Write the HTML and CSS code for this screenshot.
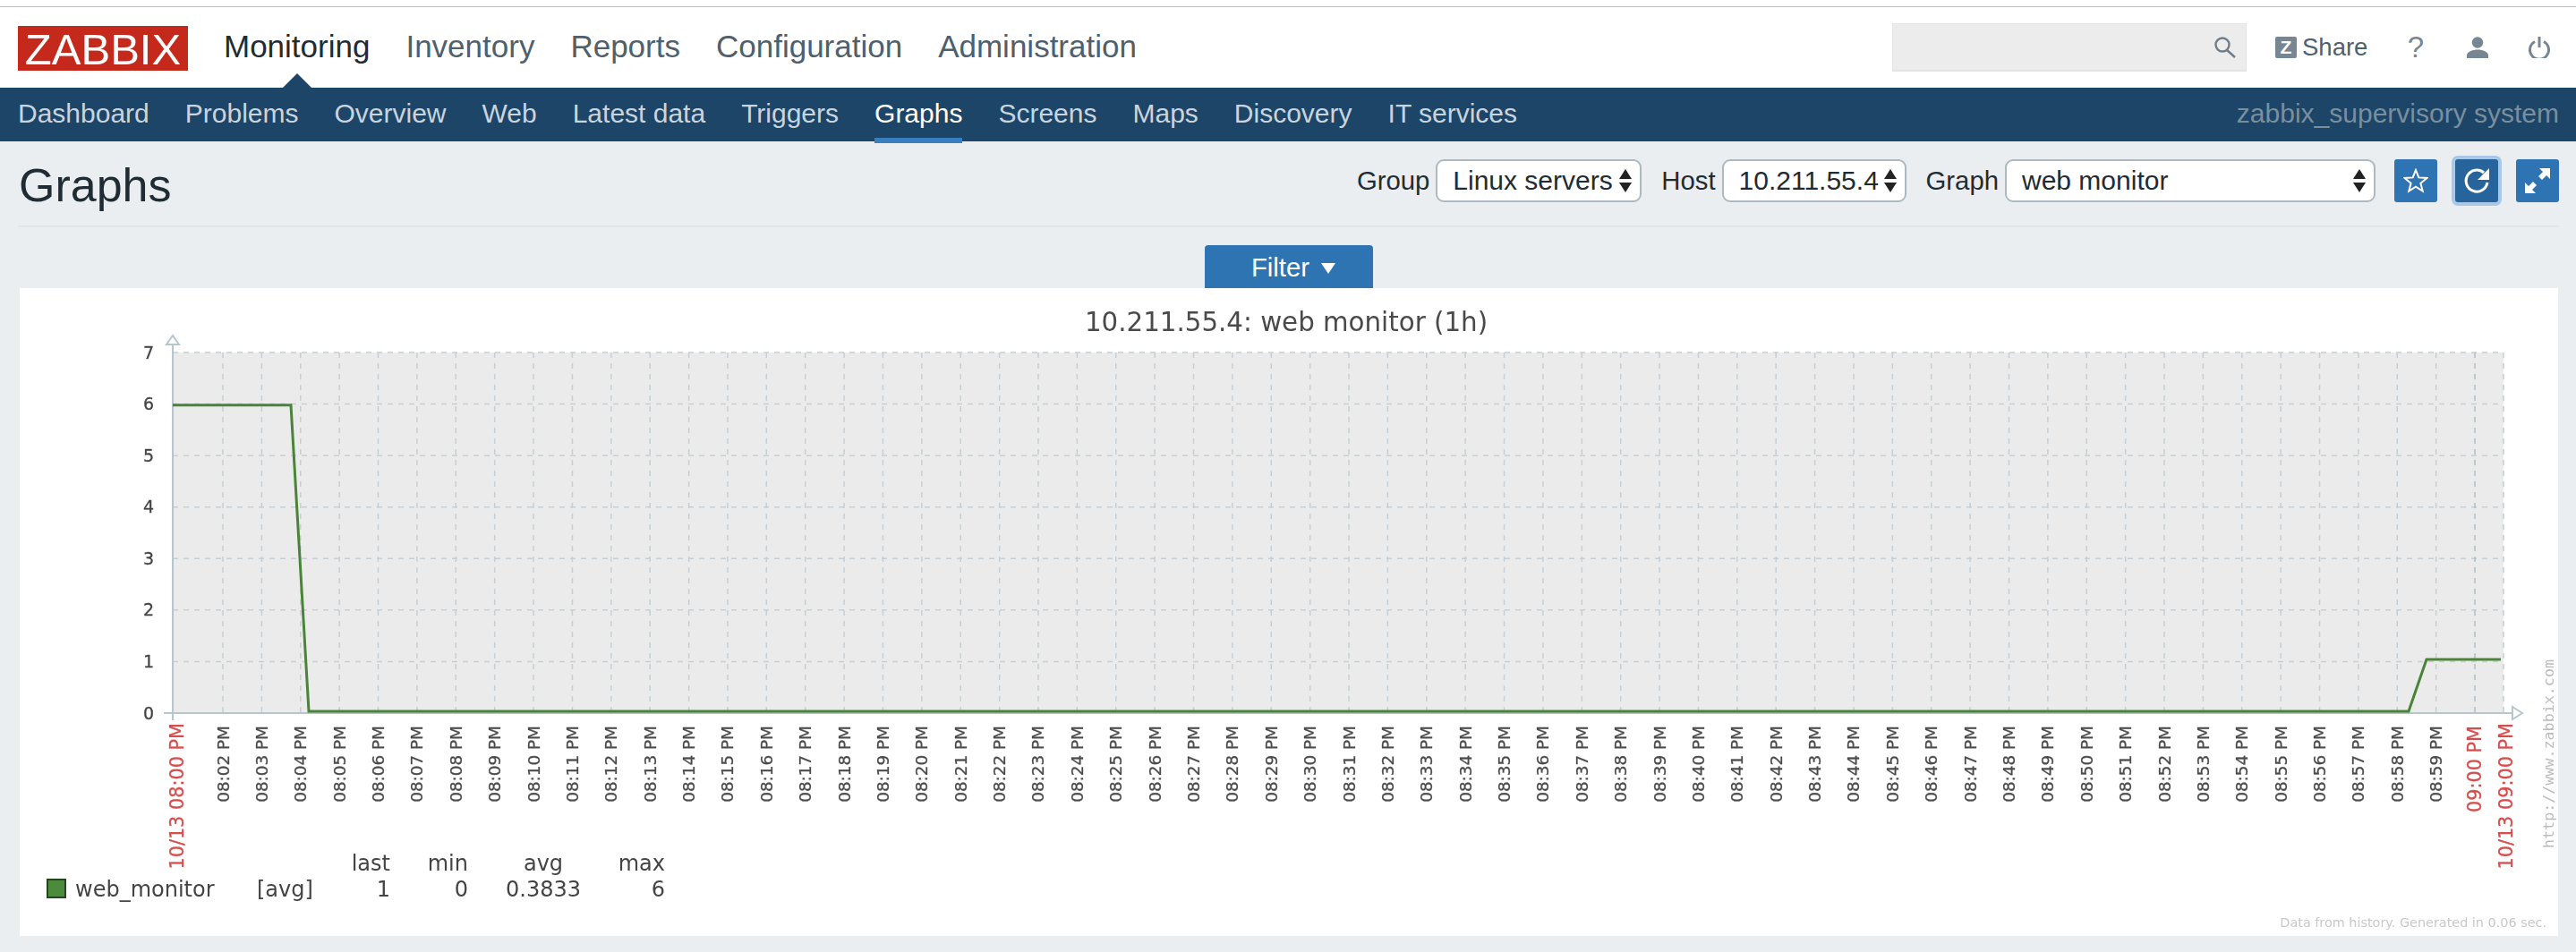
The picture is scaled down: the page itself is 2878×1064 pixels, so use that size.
FILE: index.html
```html
<!DOCTYPE html>
<html>

<head>
    <meta charset='utf-8'>
    <title>Graphs</title>
    <link rel="stylesheet" href="styles.css">
    <script src="chart.js" defer></script>
</head>

<body>
    <div class="top-line"></div>
    <header class="header">
        <a class="logo">ZABBIX</a>
        <nav class="main-nav">
            <a class="main-link active">Monitoring</a>
            <a class="main-link">Inventory</a>
            <a class="main-link">Reports</a>
            <a class="main-link">Configuration</a>
            <a class="main-link">Administration</a>
        </nav>
        <div class="tools">
            <div class="search">
                <svg class="search-icon" viewBox="0 0 26 24">
                    <circle cx="10" cy="9" r="7.5" />
                    <path d="M15 15 L24 23" />
                </svg>
            </div>
            <a class="share"><span class="share-z">Z</span>Share</a>
            <a class="help">?</a>
            <svg class="tool-icon user" viewBox="0 0 24 24">
                <circle cx="12" cy="6.5" r="6.2" />
                <path d="M0 24 V21 C0 17 6 14.5 12 14.5 C18 14.5 24 17 24 21 V24 Z" />
            </svg>
            <svg class="tool-icon power" viewBox="0 0 24 24">
                <path d="M7 5.5 A10.5 10.5 0 1 0 17 5.5" />
                <path d="M12 0 V12" />
            </svg>
        </div>
    </header>
    <nav class="sub-nav">
        <a class="sub-link">Dashboard</a>
        <a class="sub-link">Problems</a>
        <a class="sub-link">Overview</a>
        <a class="sub-link">Web</a>
        <a class="sub-link">Latest data</a>
        <a class="sub-link">Triggers</a>
        <a class="sub-link active">Graphs</a>
        <a class="sub-link">Screens</a>
        <a class="sub-link">Maps</a>
        <a class="sub-link">Discovery</a>
        <a class="sub-link">IT services</a>
        <span class="server-name">zabbix_supervisory system</span>
    </nav>
    <main>
        <div class="title-row">
            <h1>Graphs</h1>
            <div class="controls">
                <label class="field">Group
                    <span class="select group-select">Linux servers<i class="updown"></i></span>
                </label>
                <label class="field">Host
                    <span class="select host-select">10.211.55.4<i class="updown"></i></span>
                </label>
                <label class="field">Graph
                    <span class="select graph-select">web monitor<i class="updown"></i></span>
                </label>
                <div class="buttons">
                    <button class="icon-btn">
                        <svg viewBox="0 0 28 28">
                            <path class="line-icon" d="M14 2 L17.3 10.4 L26.4 11 L19.4 16.8 L21.7 25.6 L14 20.7 L6.3 25.6 L8.6 16.8 L1.6 11 L10.7 10.4 Z" />
                        </svg>
                    </button>
                    <button class="icon-btn focused">
                        <svg viewBox="0 0 28 28">
                            <path class="line-icon thick" d="M22 5 A12 12 0 1 0 26 16" />
                            <path class="solid-icon" d="M28 0 V13 H15 Z" />
                        </svg>
                    </button>
                    <button class="icon-btn">
                        <svg viewBox="0 0 28 28">
                            <path class="solid-icon" d="M16 0 H28 V12 L24 8 L19 13 L15 9 L20 4 Z" />
                            <path class="solid-icon" d="M0 16 L4 20 L9 15 L13 19 L8 24 L12 28 H0 Z" />
                        </svg>
                    </button>
                </div>
            </div>
        </div>
        <div class="filter-row">
            <a class="filter-tab">Filter<i class="caret"></i></a>
        </div>
        <section class="panel">
            <svg id="chart" class="chart" viewBox="22 322 2836 724">
                <text class="chart-title" x="1437" y="370">10.211.55.4: web monitor (1h)</text>
                <rect class="plot" x="193" y="394" width="2604" height="403" />
                <g id="grid"></g>
                <path class="axis" d="M193 385 V805 M183 797 H2807" />
                <path class="arrow" d="M193 375 L186 385 H200 Z" />
                <path class="arrow" d="M2818 797 L2807 790 V804 Z" />
                <polyline class="series" points="193,452.7 325,452.7 345,795 2691,795 2711,737 2794,737" />
                <g id="labels"></g>

                <text class="legend" x="436" y="973" text-anchor="end">last</text>
                <text class="legend" x="523" y="973" text-anchor="end">min</text>
                <text class="legend" x="607" y="973" text-anchor="middle">avg</text>
                <text class="legend" x="743" y="973" text-anchor="end">max</text>
                <rect class="legend-box" x="53" y="983" width="20" height="20" />
                <text class="legend" x="84" y="1002">web_monitor</text>
                <text class="legend" x="287" y="1002">[avg]</text>
                <text class="legend" x="436" y="1002" text-anchor="end">1</text>
                <text class="legend" x="523" y="1002" text-anchor="end">0</text>
                <text class="legend" x="607" y="1002" text-anchor="middle">0.3833</text>
                <text class="legend" x="743" y="1002" text-anchor="end">6</text>

                <text class="site-url" transform="translate(2853 948) rotate(-90)">http://www.zabbix.com</text>
                <text class="generated" x="2845" y="1036" text-anchor="end">Data from history. Generated in 0.06 sec.</text>
            </svg>
        </section>
    </main>
</body>

</html>
```

FILE: styles.css
```css
body,
html {
    margin: 0;
    padding: 0;
    height: 1064px;
    overflow: hidden;
}

body {
    background: #ebeef1;
    font-family: "Liberation Sans", Arial, sans-serif;
    font-size: 29.3px;
    color: #1f2c33;
}

.top-line {
    height: 7px;
    background: #fff;
    border-bottom: 1px solid #bdbdbd;
}

/* top header */
.header {
    display: flex;
    align-items: center;
    height: 90px;
    padding: 0 29px 0 20px;
    background: #fff;
}

.logo {
    width: 190px;
    height: 50px;
    margin-top: 1px;
    background: #c5291b;
    color: #fff;
    font-size: 49px;
    line-height: 52px;
    text-align: center;
}

.main-nav {
    display: flex;
    gap: 40px;
    margin: 0 0 3px 40px;
}

.main-link {
    position: relative;
    font-size: 35px;
    color: #4f5f6b;
}

.main-link.active {
    color: #1f2c33;
}

.main-link.active::after {
    content: "";
    position: absolute;
    left: 50%;
    top: 50px;
    margin-left: -16px;
    border-left: 16px solid transparent;
    border-right: 16px solid transparent;
    border-bottom: 16px solid #1c4568;
}

.tools {
    display: flex;
    align-items: center;
    margin-left: auto;
}

.search {
    display: flex;
    align-items: center;
    justify-content: flex-end;
    box-sizing: border-box;
    width: 396px;
    height: 54px;
    padding-right: 10px;
    background: #ececec;
    border: 1px solid #e4e4e4;
    border-bottom-width: 2px;
}

.search-icon {
    width: 26px;
    height: 24px;
    fill: none;
    stroke: #6f7d88;
    stroke-width: 2.4;
}

.share {
    display: flex;
    align-items: center;
    gap: 6px;
    width: 101px;
    margin-left: 32px;
    color: #4f5f6b;
    font-size: 27.5px;
}

.share-z {
    flex: none;
    width: 24px;
    height: 24px;
    border-radius: 2px;
    background: #768692;
    color: #fff;
    font-size: 21px;
    font-weight: bold;
    line-height: 24px;
    text-align: center;
}

.help {
    width: 24px;
    margin-left: 44px;
    color: #768692;
    font-size: 33px;
    text-align: center;
}

.tool-icon {
    width: 24px;
    height: 24px;
    margin-left: 45px;
}

.user {
    fill: #768692;
}

.power {
    fill: none;
    stroke: #768692;
    stroke-width: 3;
}

/* blue menu */
.sub-nav {
    display: flex;
    align-items: center;
    gap: 40px;
    box-sizing: border-box;
    height: 60px;
    padding: 0 19px 2px 20px;
    background: #1c4568;
    font-size: 30px;
}

.sub-link {
    position: relative;
    color: #c8d5de;
}

.sub-link.active {
    color: #fff;
}

.sub-link.active::after {
    content: "";
    position: absolute;
    left: 0;
    right: 0;
    bottom: -16px;
    height: 6px;
    background: #3a7fbd;
}

.server-name {
    margin-left: auto;
    color: #7a8f9e;
}

/* title row */
.title-row {
    display: flex;
    justify-content: space-between;
    height: 94px;
    margin: 0 19px 0 20px;
    border-bottom: 2px solid #e3e6e9;
}

h1 {
    margin: 19px 0 0 1px;
    font-size: 52px;
    font-weight: normal;
    line-height: 60px;
}

.controls {
    display: flex;
    align-items: center;
    gap: 22px;
    height: 48px;
    margin-top: 20px;
}

.field {
    display: flex;
    align-items: center;
    gap: 7px;
}

.select {
    position: relative;
    display: block;
    box-sizing: border-box;
    height: 48px;
    padding-left: 17px;
    background: #fff;
    border: 2px solid #adb8bf;
    border-radius: 9px;
    font-size: 30px;
    line-height: 44px;
}

.group-select {
    width: 230px;
}

.host-select {
    width: 206px;
}

.graph-select {
    width: 414px;
}

.updown {
    position: absolute;
    right: 9px;
    top: 9px;
    width: 14px;
    height: 26px;
}

.updown::before,
.updown::after {
    content: "";
    position: absolute;
    left: 0;
    border-left: 7px solid transparent;
    border-right: 7px solid transparent;
}

.updown::before {
    top: 0;
    border-bottom: 11px solid #222;
}

.updown::after {
    bottom: 0;
    border-top: 11px solid #222;
}

.buttons {
    display: flex;
    gap: 20px;
    margin-left: -1px;
}

.icon-btn {
    display: flex;
    align-items: center;
    justify-content: center;
    width: 48px;
    height: 48px;
    padding: 0;
    background: #2f74b2;
    border: 0;
    border-radius: 3px;
}

.icon-btn svg {
    width: 28px;
    height: 28px;
}

.icon-btn.focused {
    background: #28649c;
    box-shadow: 0 0 0 4px #a9c8e8;
}

.line-icon {
    fill: none;
    stroke: #fff;
    stroke-width: 2;
}

.line-icon.thick {
    stroke-width: 3;
}

.solid-icon {
    fill: #fff;
}

/* filter tab */
.filter-row {
    display: flex;
    justify-content: center;
    padding: 20px 0 0 2px;
}

.filter-tab {
    display: flex;
    align-items: center;
    justify-content: center;
    gap: 13px;
    box-sizing: border-box;
    width: 188px;
    height: 48px;
    padding: 2px 0 0 10px;
    background: #2f74b2;
    border-radius: 4px 4px 0 0;
    color: #fff;
}

.caret {
    margin-top: 2px;
    border-left: 8px solid transparent;
    border-right: 8px solid transparent;
    border-top: 12px solid #fff;
}

/* graph */
.panel {
    height: 724px;
    margin: 0 20px 0 22px;
    background: #fff;
}

.chart {
    display: block;
    width: 2836px;
    height: 724px;
    font-family: "DejaVu Sans", sans-serif;
    filter: blur(0.7px);
}

.chart-title {
    fill: #4a4a4a;
    font-size: 29.3px;
    text-anchor: middle;
}

.plot {
    fill: #ebebeb;
}

.grid-line {
    fill: none;
    stroke: #c6cfd5;
    stroke-width: 1.5;
    stroke-dasharray: 6 6;
}

.grid-line.strong {
    stroke: #b0bdc5;
}

.axis {
    fill: none;
    stroke: #b7c5cd;
    stroke-width: 2;
}

.arrow {
    fill: #fff;
    stroke: #b7c5cd;
    stroke-width: 2;
}

.series {
    fill: none;
    stroke: #4a8439;
    stroke-width: 3;
}

.y-label {
    fill: #444;
    stroke: #444;
    stroke-width: 0.3;
    font-size: 19px;
    text-anchor: end;
}

.time-label {
    fill: #4a4a4a;
    stroke: #4a4a4a;
    stroke-width: 0.3;
    font-size: 18.4px;
    text-anchor: end;
}

.time-label.red {
    fill: #d94c4c;
    stroke: #d94c4c;
    font-size: 20.8px;
}

.legend {
    fill: #444;
    font-size: 24px;
}

.legend-box {
    fill: #4c8a3c;
    stroke: #23471c;
    stroke-width: 2;
}

.site-url {
    fill: #bbb;
    font-family: "DejaVu Sans Mono", monospace;
    font-size: 16.7px;
}

.generated {
    fill: #c8c8c8;
    font-size: 14.4px;
}
```

FILE: chart.js
```js
const SVG_NS = "http://www.w3.org/2000/svg"
const PLOT_TOP = 394
const PLOT_BOTTOM = 797
const PLOT_RIGHT = 2797
const ROW = (PLOT_BOTTOM - PLOT_TOP) / 7

const add = (parent, tag, attrs, text) => {
    const el = document.createElementNS(SVG_NS, tag)
    Object.keys(attrs).forEach((key) => el.setAttribute(key, attrs[key]))
    if (text) el.textContent = text
    parent.appendChild(el)
}

const minuteX = (minute) => 249 + 43.38 * (minute - 2)

const grid = document.querySelector("#grid")
const labels = document.querySelector("#labels")

// Value rows.
for (let value = 0; value <= 7; value++) {
    const y = PLOT_BOTTOM - value * ROW
    if (value > 0) {
        add(grid, "path", { class: "grid-line", d: `M193 ${y} H${PLOT_RIGHT}` })
    }
    add(labels, "text", { class: "y-label", x: 172, y: y + 6.5 }, String(value))
}

// One column for each minute.
for (let minute = 2; minute <= 60; minute++) {
    const x = minuteX(minute)
    const strong = minute === 60
    add(grid, "path", {
        class: strong ? "grid-line strong" : "grid-line",
        d: `M${x} ${PLOT_TOP} V${PLOT_BOTTOM}`,
    })
    const name = strong ? "09:00 PM" : `08:${String(minute).padStart(2, "0")} PM`
    add(labels, "text", {
        class: strong ? "time-label red" : "time-label",
        transform: `translate(${x + 6.5} 811) rotate(-90)`,
    }, name)
}
add(grid, "path", { class: "grid-line", d: `M${PLOT_RIGHT} ${PLOT_TOP} V${PLOT_BOTTOM}` })

// Both ends of the period carry the date.
add(labels, "text", { class: "time-label red", transform: "translate(205 808) rotate(-90)" }, "10/13 08:00 PM")
add(labels, "text", { class: "time-label red", transform: "translate(2807 808) rotate(-90)" }, "10/13 09:00 PM")
```
